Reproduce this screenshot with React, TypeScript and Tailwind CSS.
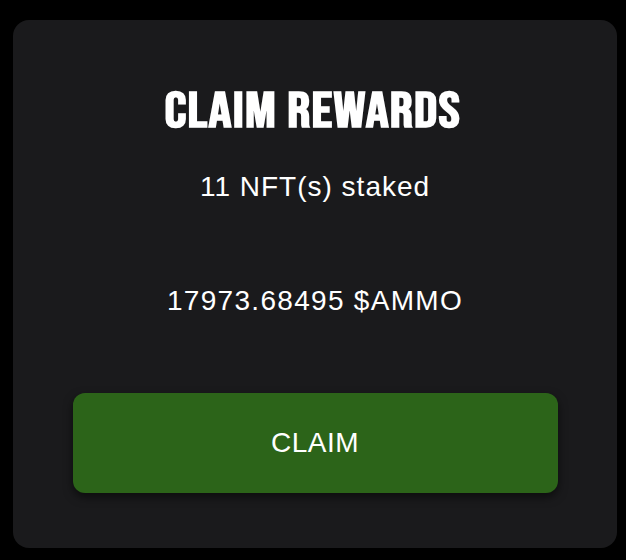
import React from 'react';

const bodyFont = "font-['Helvetica_Neue','Liberation_Sans',Arial,sans-serif]";

export default function App() {
  const staked = 11;
  const rewards = '17973.68495';

  return (
    <div className="min-h-screen bg-black pl-[13px] pt-[20px]">
      {/* 卡片 */}
      <div className="w-[604px] h-[528px] rounded-[16px] bg-[#1a1a1c] flex flex-col items-center pt-[69px] pb-[55px]">
        <h1 className="font-['Bebas_Neue','Liberation_Sans_Narrow','Liberation_Sans',sans-serif] font-bold text-[48.5px] leading-none tracking-[1px] text-white scale-x-[1.18] whitespace-nowrap -translate-x-[2px]">
          CLAIM REWARDS
        </h1>
        <p className={`${bodyFont} mt-[35px] text-[28px] leading-none tracking-[1px] text-white`}>
          {staked} NFT(s) staked
        </p>
        <p className={`${bodyFont} mt-[86px] text-[28px] leading-none tracking-[1.3px] text-white`}>
          {rewards} $AMMO
        </p>
        <button
          type="button"
          className={`${bodyFont} mt-[78px] w-[485px] h-[100px] rounded-[12px] bg-[#2c6419] shadow-[0_4px_10px_rgba(0,0,0,0.55)] flex items-center justify-center text-[28px] leading-none tracking-[0.5px] text-white`}
        >
          CLAIM
        </button>
      </div>
    </div>
  );
}
